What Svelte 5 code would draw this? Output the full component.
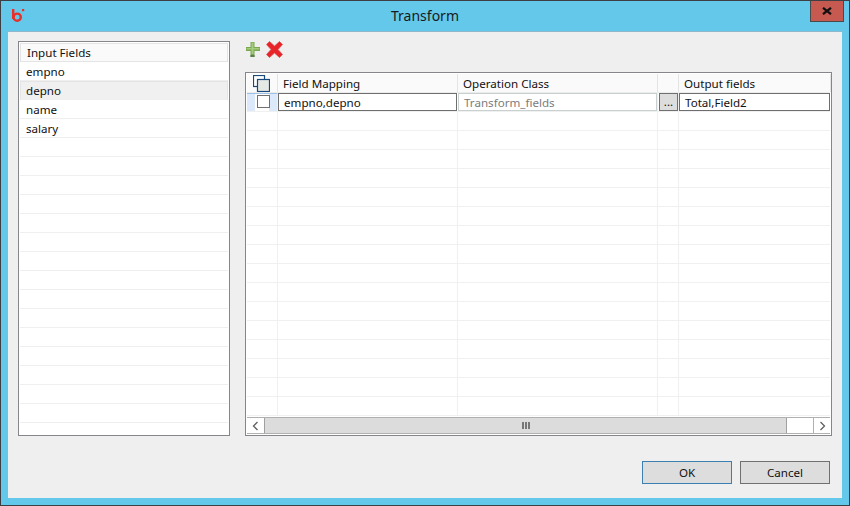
<script>
  const listRows = ['empno', 'depno', 'name', 'salary', ...Array(16).fill('')];
  const gridRows = Array(16).fill(0);
</script>

<div class="window">
  <div class="titlebar">
    <svg class="logo" width="15" height="15" viewBox="0 0 15 15">
      <path d="M2.2 1V11" stroke="#e8302a" stroke-width="2.4" fill="none" />
      <circle cx="6.2" cy="9.2" r="3.6" stroke="#e8302a" stroke-width="2.4" fill="none" />
      <rect x="11" y="1" width="2.2" height="2.2" fill="#e8302a" />
    </svg>
    <span class="title">Transform</span>
    <button class="close" aria-label="Close">
      <svg width="10" height="8" viewBox="0 0 10 8"><path d="M1 0.8L9 7.2M9 0.8L1 7.2" stroke="#111" stroke-width="2.2" /></svg>
    </button>
  </div>

  <div class="client">
    <div class="main">
      <div class="list">
        <div class="list-head">Input Fields</div>
        {#each listRows as row, i}
          <div class="list-row" class:selected={i === 1}>{row}</div>
        {/each}
      </div>

      <div class="right">
        <div class="toolbar">
          <svg width="16" height="17" viewBox="0 0 16 17">
            <path d="M5.5 1H9.5V6H15V10H9.5V16H5.5V10H1V6H5.5Z" fill="#7da653" />
            <path d="M6.5 1.5H8.5V7H14.5V8.5H8.5V13H6.5V8.5H1.5V7H6.5Z" fill="#a3cc7c" />
            <path d="M5.5 14H9.5V16H5.5Z" fill="#5d7d50" />
          </svg>
          <svg class="remove" width="17" height="17" viewBox="0 0 17 17">
            <path d="M3.5 0.5L8.5 5L13.5 0.5L16.5 3.5L12 8.5L16.5 13.5L13.5 16.5L8.5 12L3.5 16.5L0.5 13.5L5 8.5L0.5 3.5Z" fill="#e8242a" stroke="#d9534f" stroke-width="0.8" />
          </svg>
        </div>

        <div class="table">
          <div class="grid-head">
            <div class="cell check-head">
              <svg width="17" height="17" viewBox="0 0 17 17">
                <rect x="0.5" y="0.5" width="11" height="11" fill="#fff" stroke="#17497c" stroke-width="1.2" />
                <rect x="4.5" y="4.5" width="12" height="12" fill="#e6e8e4" stroke="#17497c" stroke-width="1.2" />
              </svg>
            </div>
            <div class="cell mapping">Field Mapping</div>
            <div class="cell operation">Operation Class</div>
            <div class="cell browse"></div>
            <div class="cell output">Output fields</div>
          </div>

          <div class="grid-row first">
            <div class="cell check-cell"><span class="checkbox"></span></div>
            <div class="cell mapping"><div class="input">empno,depno</div></div>
            <div class="cell operation"><div class="input muted">Transform_fields</div></div>
            <div class="cell browse"><button class="dots">...</button></div>
            <div class="cell output"><div class="input">Total,Field2</div></div>
          </div>

          {#each gridRows as _}
            <div class="grid-row">
              <div class="cell check-cell"></div>
              <div class="cell mapping"></div>
              <div class="cell operation"></div>
              <div class="cell browse"></div>
              <div class="cell output"></div>
            </div>
          {/each}

          <div class="scrollbar">
            <div class="arrow">
              <svg width="7" height="10" viewBox="0 0 7 10"><path d="M5.5 1L1.5 5L5.5 9" stroke="#606060" stroke-width="1.3" fill="none" /></svg>
            </div>
            <div class="thumb">
              <span></span><span></span><span></span>
            </div>
            <div class="track"></div>
            <div class="arrow right-arrow">
              <svg width="7" height="10" viewBox="0 0 7 10"><path d="M1.5 1L5.5 5L1.5 9" stroke="#606060" stroke-width="1.3" fill="none" /></svg>
            </div>
          </div>
        </div>
      </div>
    </div>

    <div class="actions">
      <button class="btn default">OK</button>
      <button class="btn">Cancel</button>
    </div>
  </div>
</div>

<style>
  :global(body) {
    margin: 0;
    background: #63c8ea;
  }

  .window {
    width: 850px;
    height: 506px;
    box-sizing: border-box;
    background: #63c8ea;
    border: 1px solid #3c3f44;
    display: flex;
    flex-direction: column;
    font-family: "Noto Sans", sans-serif;
    font-size: 11.6px;
    color: #111;
    overflow: hidden;
  }

  .titlebar {
    height: 30px;
    flex: none;
    display: flex;
    justify-content: center;
    position: relative;
  }

  .logo {
    position: absolute;
    left: 10px;
    top: 7px;
  }

  .title {
    font-size: 14px;
    line-height: 29px;
    color: #1a1a1a;
  }

  .close {
    position: absolute;
    left: 809px;
    top: -1px;
    width: 34px;
    height: 22px;
    padding: 0;
    box-sizing: border-box;
    background: #c75a50;
    border: 1px solid #4a4a4a;
    display: flex;
    align-items: center;
    justify-content: center;
  }

  .client {
    margin: 0 7px 7px;
    flex: 1;
    background: #efefef;
    border-top: 1px solid #8fb8cc;
    padding: 9px 10px 14px;
    display: flex;
    flex-direction: column;
    min-height: 0;
  }

  .main {
    display: flex;
    gap: 15px;
    height: 395px;
    flex: none;
  }

  .list {
    width: 212px;
    box-sizing: border-box;
    background: #fff;
    border: 1px solid #85858c;
    padding: 1px;
    overflow: hidden;
    flex: none;
  }

  .list-head {
    height: 19px;
    box-sizing: border-box;
    line-height: 18px;
    padding-left: 6px;
    background: #fafafa;
    border: 1px solid #e4e4e4;
  }

  .list-row {
    height: 19px;
    box-sizing: border-box;
    line-height: 20px;
    padding-left: 6px;
    border-bottom: 1px solid #efefef;
  }

  .list-row.selected {
    background: #f0f0f0;
    border-top: 1px solid #e4e4e4;
    border-left: 1px solid #e4e4e4;
    border-right: 1px solid #e4e4e4;
    padding-left: 5px;
    line-height: 18px;
  }

  .right {
    flex: 1;
    display: flex;
    flex-direction: column;
  }

  .toolbar {
    height: 31px;
    flex: none;
    display: flex;
    gap: 4px;
    align-items: flex-start;
  }

  .remove {
    margin-left: 1px;
  }

  .table {
    width: 587px;
    height: 364px;
    box-sizing: border-box;
    background: #fff;
    border: 1px solid #85858c;
    padding: 1px;
    position: relative;
    overflow: hidden;
  }

  .grid-head,
  .grid-row {
    display: flex;
    height: 19px;
    box-sizing: border-box;
    border-bottom: 1px solid #f0f0f0;
  }

  .grid-head {
    background: #fafafa;
    border-bottom: 1px solid #ececec;
  }

  .cell {
    box-sizing: border-box;
    border-right: 1px solid #f0f0f0;
    flex: none;
    height: 100%;
  }

  .grid-head .cell {
    line-height: 20px;
    padding-left: 5px;
    border-right: 1px solid #e4e4e4;
  }

  .check-head,
  .check-cell {
    width: 31px;
  }

  .check-head {
    padding: 1px 0 0 6px !important;
  }

  .check-head svg {
    display: block;
  }

  .mapping {
    width: 180px;
  }

  .operation {
    width: 200px;
  }

  .browse {
    width: 21px;
  }

  .output {
    width: 152px;
    border-right: none;
  }

  .check-cell {
    position: relative;
  }

  .first .check-cell {
    background: linear-gradient(90deg, #dbe9fb 0 8px, #fff 8px 22px, #dbe9fb 22px);
    border-top: 1px solid #9dc0e6;
  }

  .checkbox {
    display: block;
    width: 13px;
    height: 13px;
    box-sizing: border-box;
    background: #fff;
    border: 1px solid #707070;
    margin: 1px 0 0 10px;
  }

  .input {
    height: 18px;
    box-sizing: border-box;
    border: 1px solid #6e6e6e;
    background: #fff;
    line-height: 17px;
    padding-left: 5px;
    white-space: nowrap;
    overflow: hidden;
  }

  .input.muted {
    border-color: #c8d0d0;
    color: #7c7c7c;
  }

  .first .cell {
    border-right: 1px solid #f0f0f0;
  }

  .first .mapping,
  .first .output {
    border-right-color: transparent;
  }

  .dots {
    display: block;
    width: 19px;
    height: 18px;
    margin: 0 0 0 1px;
    padding: 0;
    box-sizing: border-box;
    background: #dddddd;
    border: 1px solid #707070;
    font: inherit;
    line-height: 16px;
    color: #111;
  }

  .scrollbar {
    position: absolute;
    left: 1px;
    right: 1px;
    bottom: 1px;
    height: 17px;
    display: flex;
    background: #fff;
    border-top: 1px solid #b0b0b0;
    border-bottom: 1px solid #b0b0b0;
    box-sizing: border-box;
  }

  .arrow {
    width: 17px;
    flex: none;
    box-sizing: border-box;
    background: #fff;
    display: flex;
    align-items: center;
    justify-content: center;
  }

  .right-arrow {
    border-left: 1px solid #b0b0b0;
  }

  .thumb {
    width: 523px;
    flex: none;
    box-sizing: border-box;
    background: #dcdcdc;
    border-left: 1px solid #a0a0a0;
    border-right: 1px solid #a0a0a0;
    display: flex;
    align-items: center;
    justify-content: center;
    gap: 1px;
  }

  .thumb span {
    width: 2px;
    height: 7px;
    background: #777;
  }

  .track {
    flex: 1;
  }

  .actions {
    display: flex;
    justify-content: flex-end;
    gap: 8px;
    margin-top: 25px;
    padding-right: 2px;
  }

  .btn {
    width: 90px;
    height: 23px;
    box-sizing: border-box;
    background: #dddddd;
    border: 1px solid #707070;
    font: inherit;
    color: #111;
    padding: 0;
  }

  .btn.default {
    border-color: #3c7fb1;
  }
</style>
